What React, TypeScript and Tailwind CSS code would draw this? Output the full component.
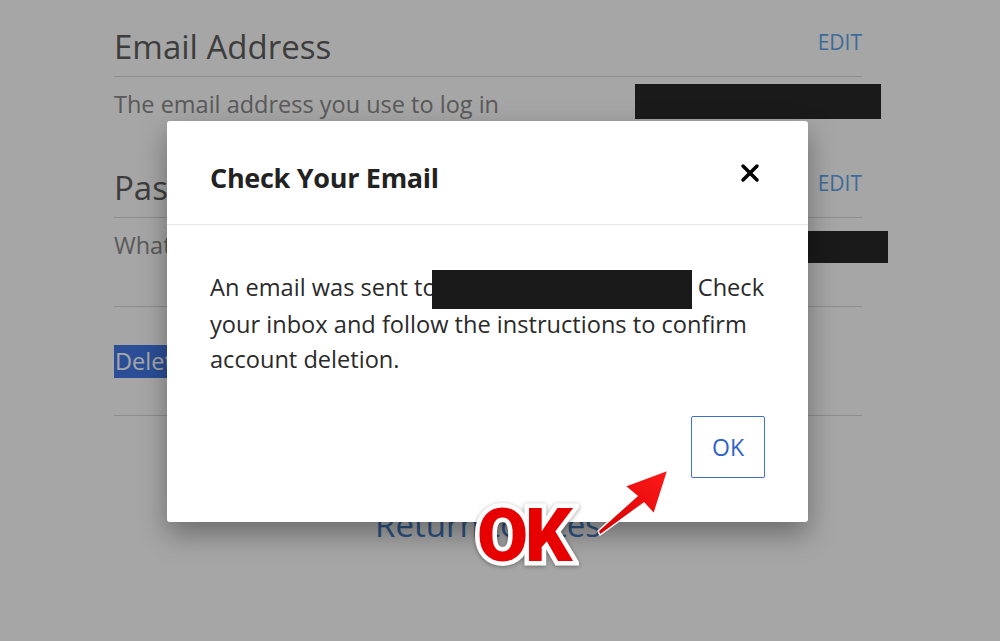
import { X } from 'lucide-react';

const font = { fontFamily: '"Open Sans", "Noto Sans", sans-serif' };

function Section({ title, note, boxClass }: { title: string; note: string; boxClass: string }) {
  return (
    <div>
      <div className="flex items-end justify-between border-b border-[#d9d9d9] pb-[7px]">
        <h2 className="text-[33px] leading-[44px] text-[#5e5e5e]">{title}</h2>
        <a className="mb-[14px] text-[21px] leading-[26px] text-[#5ea6ee]">EDIT</a>
      </div>
      <div className="flex items-start justify-between">
        <p className="text-[23.5px] leading-[54px] text-[#8a8a8a]">{note}</p>
        <div className={`bg-[#282828] ${boxClass}`} />
      </div>
    </div>
  );
}

export default function App() {
  return (
    <div className="relative min-h-[641px] w-[1000px] overflow-hidden bg-white" style={font}>
      {/* page behind the dialog */}
      <div className="ml-[114px] w-[748px] pt-[25px]">
        <Section title="Email Address" note="The email address you use to log in" boxClass="mr-[-19px] mt-[7px] h-[35px] w-[246px]" />
        <div className="mt-[35px]">
          <Section title="Password" note="What you use to log in" boxClass="mr-[-26px] mt-[13px] h-[32px] w-[80px]" />
        </div>
        <div className="mt-[34px] flex border-t border-[#d9d9d9] pt-[38px] pb-[37px]">
          <span className="inline-block h-[33px] bg-[#4379e9] px-[1px] text-[23.5px] leading-[33px] text-white">Delete Account</span>
        </div>
        <div className="border-t border-[#d9d9d9] pt-[89px] text-center">
          <a className="text-[33px] leading-[40px] text-[#4480cb]">Return to Sites</a>
        </div>
      </div>

      {/* overlay */}
      <div className="absolute inset-0 bg-black/35" />

      {/* dialog */}
      <div className="absolute left-[167px] top-[121px] flex h-[401px] w-[641px] flex-col rounded-[3px] bg-white shadow-[0_12px_28px_rgba(0,0,0,0.35)]">
        <div className="flex h-[104px] items-center justify-between border-b border-[#e6e6e6] pl-[43px] pr-[44px]">
          <h3 className="mt-[12px] text-[27px] font-bold tracking-[-0.3px] text-[#222]">Check Your Email</h3>
          <X className="h-[28px] w-[28px] text-black" strokeWidth={3} />
        </div>
        <div className="px-[43px] pt-[45px]">
          <p className="text-[23.6px] leading-[35px] text-[#2a2a2a]">
            An email was sent to
            <span className="my-[-2px] ml-[-5px] inline-block h-[39px] w-[260px] bg-[#1a1a1a] align-[-11px]" /> Check your inbox and follow the
            instructions to confirm account deletion.
          </p>
        </div>
        <div className="mt-auto flex justify-end pb-[44px] pr-[43px]">
          <button className="h-[62px] w-[74px] rounded-[2px] border-[1.5px] border-[#3b6fd4] text-[23px] text-[#2f63c9]">OK</button>
        </div>
      </div>

      {/* annotation */}
      <div
        className="absolute left-[477px] top-[499px] text-[74px] font-black leading-none text-[#e60000] [-webkit-text-stroke:9px_white] [paint-order:stroke_fill] [filter:drop-shadow(0_1px_2px_rgba(0,0,0,0.35))]"
        style={{ fontFamily: 'Roboto, "DejaVu Sans", sans-serif', letterSpacing: '-3px' }}
      >
        OK
      </div>
      <svg className="absolute left-[590px] top-[460px]" width="90" height="85" viewBox="590 460 90 85">
        <defs>
          <linearGradient id="ar" x1="0" y1="1" x2="1" y2="0">
            <stop offset="0" stopColor="#d40000" />
            <stop offset="1" stopColor="#ff1a1a" />
          </linearGradient>
        </defs>
        <polygon
          points="600,535 598,531 637,496 625,486 668,470 654,514 644,503"
          fill="url(#ar)"
          stroke="white"
          strokeWidth="1.5"
          strokeLinejoin="round"
        />
      </svg>
    </div>
  );
}
